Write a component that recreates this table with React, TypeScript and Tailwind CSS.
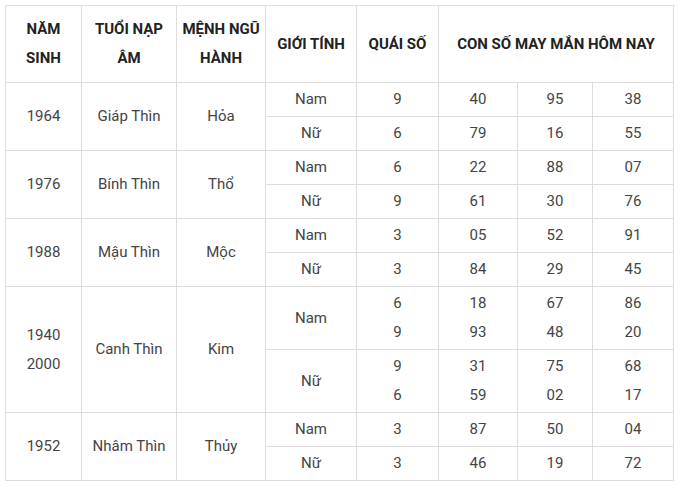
import React from "react";

type Sub = { gender: string; quai: string[]; nums: string[][] };
type Group = { years: string[]; tuoi: string; menh: string; tall?: boolean; subs: Sub[] };

const groups: Group[] = [
  {
    years: ["1964"],
    tuoi: "Giáp Thìn",
    menh: "Hỏa",
    subs: [
      { gender: "Nam", quai: ["9"], nums: [["40"], ["95"], ["38"]] },
      { gender: "Nữ", quai: ["6"], nums: [["79"], ["16"], ["55"]] },
    ],
  },
  {
    years: ["1976"],
    tuoi: "Bính Thìn",
    menh: "Thổ",
    subs: [
      { gender: "Nam", quai: ["6"], nums: [["22"], ["88"], ["07"]] },
      { gender: "Nữ", quai: ["9"], nums: [["61"], ["30"], ["76"]] },
    ],
  },
  {
    years: ["1988"],
    tuoi: "Mậu Thìn",
    menh: "Mộc",
    subs: [
      { gender: "Nam", quai: ["3"], nums: [["05"], ["52"], ["91"]] },
      { gender: "Nữ", quai: ["3"], nums: [["84"], ["29"], ["45"]] },
    ],
  },
  {
    years: ["1940", "2000"],
    tuoi: "Canh Thìn",
    menh: "Kim",
    tall: true,
    subs: [
      { gender: "Nam", quai: ["6", "9"], nums: [["18", "93"], ["67", "48"], ["86", "20"]] },
      { gender: "Nữ", quai: ["9", "6"], nums: [["31", "59"], ["75", "02"], ["68", "17"]] },
    ],
  },
  {
    years: ["1952"],
    tuoi: "Nhâm Thìn",
    menh: "Thủy",
    subs: [
      { gender: "Nam", quai: ["3"], nums: [["87"], ["50"], ["04"]] },
      { gender: "Nữ", quai: ["3"], nums: [["46"], ["19"], ["72"]] },
    ],
  },
];

function Lines({ items }: { items: string[] }) {
  return (
    <>
      {items.map((t, i) => (
        <div key={i}>{t}</div>
      ))}
    </>
  );
}

const th = "border border-[#dddddd] p-0 align-middle text-center font-bold text-[#222222]";
const td = "border border-[#dddddd] p-0 align-middle text-center";

export default function App() {
  return (
    <div className="min-h-screen bg-white pl-[5px] pt-[5px] font-['Roboto','Liberation_Sans',sans-serif] text-[15px] leading-[29px] text-[#444444]">
      <table className="w-[668px] table-fixed border-collapse">
        <colgroup>
          <col className="w-[76px]" />
          <col className="w-[95px]" />
          <col className="w-[89px]" />
          <col className="w-[91px]" />
          <col className="w-[82px]" />
          <col className="w-[79px]" />
          <col className="w-[75px]" />
          <col className="w-[81px]" />
        </colgroup>
        <thead>
          <tr className="h-[77px]">
            <th className={th}>
              NĂM
              <br />
              SINH
            </th>
            <th className={th}>
              TUỔI NẠP
              <br />
              ÂM
            </th>
            <th className={th}>
              MỆNH NGŨ
              <br />
              HÀNH
            </th>
            <th className={th}>GIỚI TÍNH</th>
            <th className={th}>QUÁI SỐ</th>
            <th className={th} colSpan={4}>
              CON SỐ MAY MẮN HÔM NAY
            </th>
          </tr>
        </thead>
        <tbody>
          {groups.map((g) =>
            g.subs.map((s, si) => (
              <tr key={g.tuoi + si} className={g.tall ? "h-[63px]" : "h-[34px]"}>
                {si === 0 && (
                  <>
                    <td className={td} rowSpan={2}>
                      <Lines items={g.years} />
                    </td>
                    <td className={td} rowSpan={2}>
                      {g.tuoi}
                    </td>
                    <td className={td} rowSpan={2}>
                      {g.menh}
                    </td>
                  </>
                )}
                <td className={td}>{s.gender}</td>
                <td className={td}>
                  <Lines items={s.quai} />
                </td>
                {s.nums.map((n, ni) => (
                  <td key={ni} className={td}>
                    <Lines items={n} />
                  </td>
                ))}
              </tr>
            ))
          )}
        </tbody>
      </table>
    </div>
  );
}
